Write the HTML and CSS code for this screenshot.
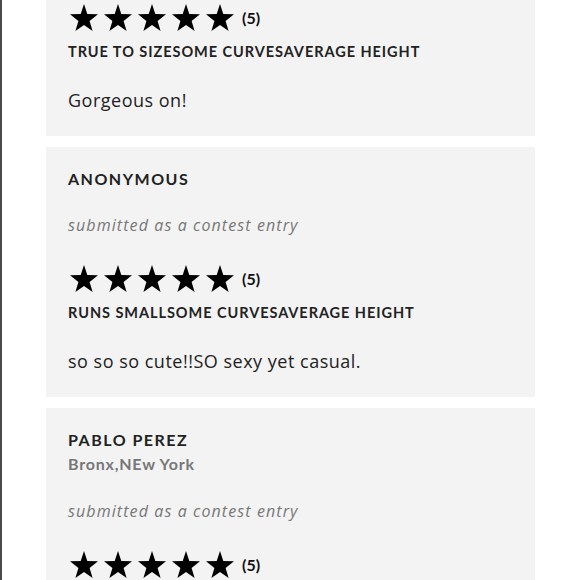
FILE: index.html
```html
<!DOCTYPE html>
<html lang="en">
<head>
<meta charset="utf-8">
<title>Reviews</title>
<link rel="stylesheet" href="styles.css">
</head>
<body>
<div class="page">
  <div class="list">
    <article class="card">
      <div class="rating">
        <span class="stars">
          <svg class="star" viewBox="0 0 28 27"><polygon points="14,0 17.3,9.9 28,10.3 19.6,16.9 22.6,27 14,21.1 5.4,27 8.4,16.9 0,10.3 10.7,9.9"/></svg>
          <svg class="star" viewBox="0 0 28 27"><polygon points="14,0 17.3,9.9 28,10.3 19.6,16.9 22.6,27 14,21.1 5.4,27 8.4,16.9 0,10.3 10.7,9.9"/></svg>
          <svg class="star" viewBox="0 0 28 27"><polygon points="14,0 17.3,9.9 28,10.3 19.6,16.9 22.6,27 14,21.1 5.4,27 8.4,16.9 0,10.3 10.7,9.9"/></svg>
          <svg class="star" viewBox="0 0 28 27"><polygon points="14,0 17.3,9.9 28,10.3 19.6,16.9 22.6,27 14,21.1 5.4,27 8.4,16.9 0,10.3 10.7,9.9"/></svg>
          <svg class="star" viewBox="0 0 28 27"><polygon points="14,0 17.3,9.9 28,10.3 19.6,16.9 22.6,27 14,21.1 5.4,27 8.4,16.9 0,10.3 10.7,9.9"/></svg>
        </span>
        <span class="count">(5)</span>
      </div>
      <p class="attrs">TRUE TO SIZESOME CURVESAVERAGE HEIGHT</p>
      <p class="body">Gorgeous on!</p>
    </article>

    <article class="card">
      <h3 class="name">ANONYMOUS</h3>
      <p class="entry">submitted as a contest entry</p>
      <div class="rating">
        <span class="stars">
          <svg class="star" viewBox="0 0 28 27"><polygon points="14,0 17.3,9.9 28,10.3 19.6,16.9 22.6,27 14,21.1 5.4,27 8.4,16.9 0,10.3 10.7,9.9"/></svg>
          <svg class="star" viewBox="0 0 28 27"><polygon points="14,0 17.3,9.9 28,10.3 19.6,16.9 22.6,27 14,21.1 5.4,27 8.4,16.9 0,10.3 10.7,9.9"/></svg>
          <svg class="star" viewBox="0 0 28 27"><polygon points="14,0 17.3,9.9 28,10.3 19.6,16.9 22.6,27 14,21.1 5.4,27 8.4,16.9 0,10.3 10.7,9.9"/></svg>
          <svg class="star" viewBox="0 0 28 27"><polygon points="14,0 17.3,9.9 28,10.3 19.6,16.9 22.6,27 14,21.1 5.4,27 8.4,16.9 0,10.3 10.7,9.9"/></svg>
          <svg class="star" viewBox="0 0 28 27"><polygon points="14,0 17.3,9.9 28,10.3 19.6,16.9 22.6,27 14,21.1 5.4,27 8.4,16.9 0,10.3 10.7,9.9"/></svg>
        </span>
        <span class="count">(5)</span>
      </div>
      <p class="attrs">RUNS SMALLSOME CURVESAVERAGE HEIGHT</p>
      <p class="body">so so so cute!!SO sexy yet casual.</p>
    </article>

    <article class="card">
      <h3 class="name">PABLO PEREZ</h3>
      <p class="location">Bronx,NEw York</p>
      <p class="entry">submitted as a contest entry</p>
      <div class="rating">
        <span class="stars">
          <svg class="star" viewBox="0 0 28 27"><polygon points="14,0 17.3,9.9 28,10.3 19.6,16.9 22.6,27 14,21.1 5.4,27 8.4,16.9 0,10.3 10.7,9.9"/></svg>
          <svg class="star" viewBox="0 0 28 27"><polygon points="14,0 17.3,9.9 28,10.3 19.6,16.9 22.6,27 14,21.1 5.4,27 8.4,16.9 0,10.3 10.7,9.9"/></svg>
          <svg class="star" viewBox="0 0 28 27"><polygon points="14,0 17.3,9.9 28,10.3 19.6,16.9 22.6,27 14,21.1 5.4,27 8.4,16.9 0,10.3 10.7,9.9"/></svg>
          <svg class="star" viewBox="0 0 28 27"><polygon points="14,0 17.3,9.9 28,10.3 19.6,16.9 22.6,27 14,21.1 5.4,27 8.4,16.9 0,10.3 10.7,9.9"/></svg>
          <svg class="star" viewBox="0 0 28 27"><polygon points="14,0 17.3,9.9 28,10.3 19.6,16.9 22.6,27 14,21.1 5.4,27 8.4,16.9 0,10.3 10.7,9.9"/></svg>
        </span>
        <span class="count">(5)</span>
      </div>
    </article>
  </div>
</div>
</body>
</html>
```

FILE: styles.css
```css
html, body {
  margin: 0;
  padding: 0;
  background: #ffffff;
  overflow: hidden;
}

.page {
  height: 580px;
  border-left: 2px solid #4a4a4a;
  padding: 0 45px 0 44px;
  overflow: hidden;
}

.list {
  margin-top: -19px;
  display: flex;
  flex-direction: column;
  gap: 11px;
}

.card {
  background: #f3f3f3;
  padding: 22px 22px 23px;
}

.name {
  margin: 0;
  font-family: "Lato", sans-serif;
  font-weight: 700;
  font-size: 16px;
  line-height: 20px;
  letter-spacing: 1.5px;
  color: #222222;
}

.location {
  margin: 2px 0 0;
  font-family: "Lato", sans-serif;
  font-weight: 700;
  font-size: 16px;
  line-height: 23px;
  letter-spacing: 0.8px;
  color: #777777;
}

.entry {
  margin: 24px 0 0;
  font-family: "Open Sans", sans-serif;
  font-style: italic;
  font-size: 16px;
  line-height: 24px;
  letter-spacing: 1.1px;
  color: #777777;
}

.rating {
  margin-top: 27px;
  height: 28px;
  display: flex;
  align-items: center;
  gap: 8px;
}

.card > .rating:first-child {
  margin-top: 0;
}

.stars {
  display: flex;
  gap: 6px;
  padding-left: 2px;
}

.star {
  width: 28px;
  height: 27px;
  fill: #000000;
  display: block;
}

.count {
  font-family: "Lato", sans-serif;
  font-weight: 700;
  font-size: 16px;
  color: #111111;
}

.attrs {
  margin: 12px 0 0;
  font-family: "Lato", sans-serif;
  font-weight: 700;
  font-size: 14.5px;
  line-height: 18px;
  letter-spacing: 0.95px;
  color: #222222;
}

.body {
  margin: 26px 0 0;
  font-family: "Open Sans", sans-serif;
  font-size: 18px;
  line-height: 26px;
  letter-spacing: 0.5px;
  color: #222222;
}
```
